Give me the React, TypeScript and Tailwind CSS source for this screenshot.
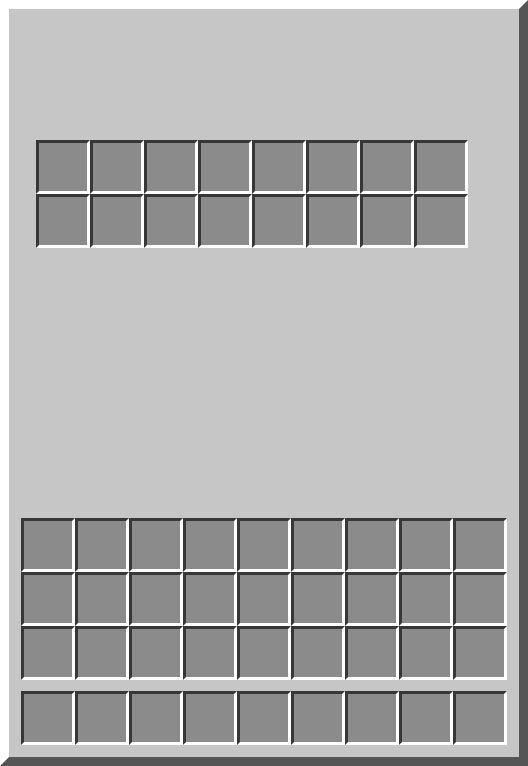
const Slot = () => (
  <div className="w-[54px] h-[54px] border-[3px] border-t-[#373737] border-l-[#373737] border-r-white border-b-white bg-[#8b8b8b]" />
);

const SlotGrid = ({ cols, rows }: { cols: number; rows: number }) => (
  <div
    className={cols === 8 ? "grid grid-cols-8 w-fit" : "grid grid-cols-9 w-fit"}
  >
    {Array.from({ length: cols * rows }).map((_, i) => (
      <Slot key={i} />
    ))}
  </div>
);

export default function App() {
  return (
    <div className="w-[528px] h-[766px] border-[9px] border-t-white border-l-white border-r-[#555555] border-b-[#555555] bg-[#c6c6c6] flex flex-col">
      {/* storage */}
      <div className="ml-[27px] mt-[131px]">
        <SlotGrid cols={8} rows={2} />
      </div>
      {/* player inventory */}
      <div className="ml-[12px] mt-[270px]">
        <SlotGrid cols={9} rows={3} />
      </div>
      {/* hotbar */}
      <div className="ml-[12px] mt-[11px]">
        <SlotGrid cols={9} rows={1} />
      </div>
    </div>
  );
}
